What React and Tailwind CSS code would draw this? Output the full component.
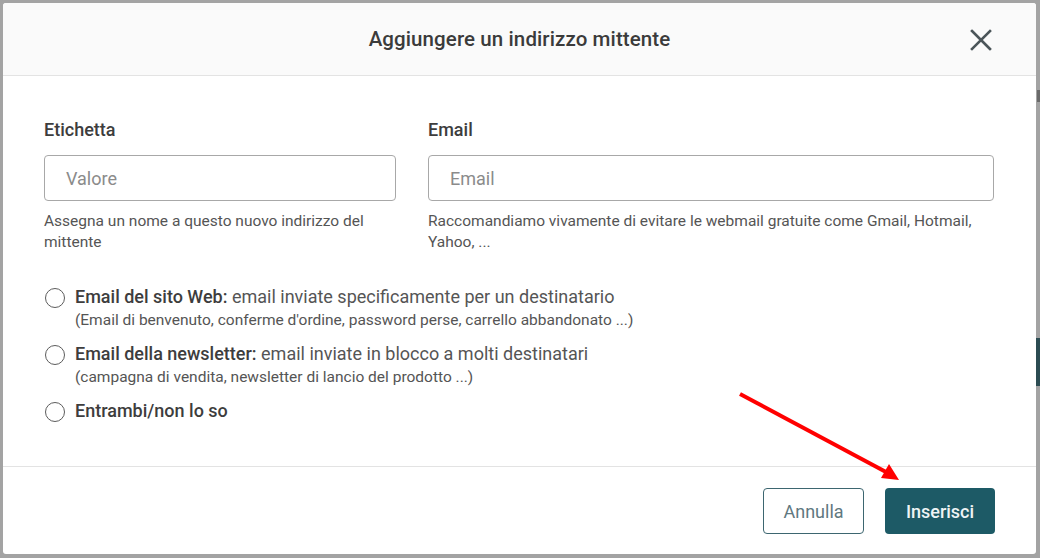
import React from 'react'

const font = { fontFamily: 'Roboto, "Liberation Sans", sans-serif' }

function Radio({ title, text, sub }) {
  return (
    <label className="flex items-start gap-[10px]">
      <span className="mt-[3px] w-[20px] h-[20px] rounded-full border-[1.5px] border-[#5c5c5c] bg-white shrink-0" />
      <span className="flex flex-col">
        <span className="text-[18px] leading-[24px] text-[#555]">
          <span className="font-medium text-[#3d3d3d]">{title}</span>
          {text}
        </span>
        {sub && <span className="text-[15.5px] leading-[22px] text-[#555]">{sub}</span>}
      </span>
    </label>
  )
}

export default function App() {
  return (
    <div className="w-[1040px] h-[558px] bg-[#a3a3a3] relative overflow-hidden pt-[3px] pl-[3px]" style={font}>
      {/* page behind the modal */}
      <div className="absolute right-0 top-[338px] w-[4px] h-[48px] bg-[#2c4c52]" />
      <div className="absolute right-0 top-[90px] w-[3px] h-[12px] bg-[#6a6a6a]" />

      {/* modal */}
      <div className="w-[1033px] h-[551px] bg-white rounded-[3px] flex flex-col">
        <div className="h-[73px] bg-[#fafafa] border-b border-[#e3e3e3] rounded-t-[3px] flex items-center justify-center relative">
          <h2 className="text-[20.5px] font-medium text-[#3b3b3b] tracking-[0.1px]">Aggiungere un indirizzo mittente</h2>
          <button className="absolute right-[43px] top-[25px] w-[24px] h-[24px] flex items-center justify-center">
            <svg width="22" height="22" viewBox="0 0 22 22" fill="none" stroke="#4b5559" strokeWidth="2.6" strokeLinecap="square">
              <path d="M2 2 L20 20 M20 2 L2 20" />
            </svg>
          </button>
        </div>

        <div className="flex-1 px-[41px] pt-[42px]">
          <div className="grid grid-cols-[352px_1fr] gap-x-[32px] pr-[1px]">
            <div className="flex flex-col">
              <span className="text-[18px] leading-[24px] font-medium text-[#3d3d3d]">Etichetta</span>
              <div className="mt-[13px] h-[46px] border border-[#a8a8a8] rounded-[4px] flex items-center pl-[21px] text-[18px] text-[#8b8b8b]">
                Valore
              </div>
              <p className="mt-[10px] text-[15.5px] leading-[21px] text-[#555]">
                Assegna un nome a questo nuovo indirizzo del mittente
              </p>
            </div>
            <div className="flex flex-col">
              <span className="text-[18px] leading-[24px] font-medium text-[#3d3d3d]">Email</span>
              <div className="mt-[13px] h-[46px] border border-[#a8a8a8] rounded-[4px] flex items-center pl-[21px] text-[18px] text-[#8b8b8b]">
                Email
              </div>
              <p className="mt-[10px] text-[15.5px] leading-[21px] text-[#555]">
                Raccomandiamo vivamente di evitare le webmail gratuite come Gmail, Hotmail, Yahoo, ...
              </p>
            </div>
          </div>

          <div className="mt-[32px] flex flex-col gap-[11px] pl-[1px]">
            <Radio
              title="Email del sito Web:"
              text=" email inviate specificamente per un destinatario"
              sub="(Email di benvenuto, conferme d'ordine, password perse, carrello abbandonato ...)"
            />
            <Radio
              title="Email della newsletter:"
              text=" email inviate in blocco a molti destinatari"
              sub="(campagna di vendita, newsletter di lancio del prodotto ...)"
            />
            <Radio title="Entrambi/non lo so" />
          </div>
        </div>

        <div className="border-t border-[#e3e3e3] pt-[21px] pb-[20px] pr-[41px] flex justify-end gap-[21px]">
          <button className="w-[101px] h-[46px] rounded-[4px] border-[1.5px] border-[#3d6670] text-[18px] text-[#5f7880] bg-white">
            Annulla
          </button>
          <button className="w-[110px] h-[46px] rounded-[4px] bg-[#1d5a66] text-[18px] font-medium text-[#eef4f5]">
            Inserisci
          </button>
        </div>
      </div>

      {/* red annotation arrow */}
      <svg className="absolute left-0 top-0 pointer-events-none" width="1040" height="558">
        <line x1="740" y1="394" x2="886" y2="472" stroke="#f00" strokeWidth="4" />
        <polygon points="899,480 881,478 889,464" fill="#f00" />
      </svg>
    </div>
  )
}
